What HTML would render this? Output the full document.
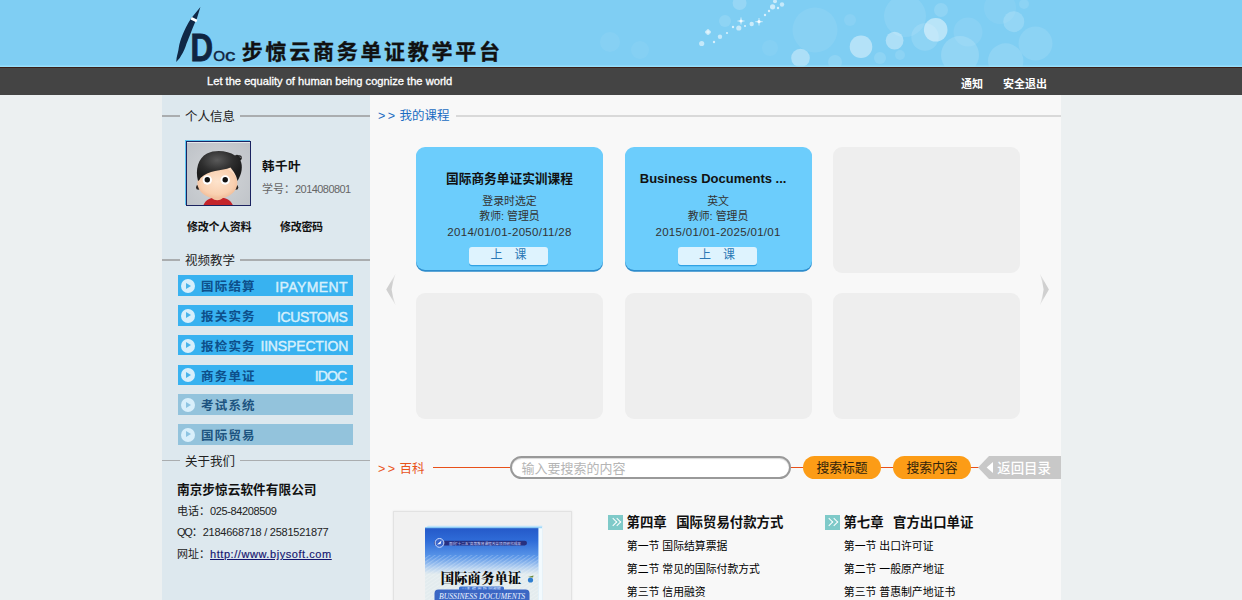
<!DOCTYPE html>
<html lang="zh-CN">
<head>
<meta charset="utf-8">
<title>步惊云商务单证教学平台</title>
<style>
*{margin:0;padding:0;box-sizing:border-box;}
html,body{width:1242px;height:600px;overflow:hidden;background:#ecf0f1;font-family:"Liberation Sans","Noto Sans CJK SC",sans-serif;font-size:12px;color:#222;}
.abs{position:absolute;}
#hdr{position:absolute;left:0;top:0;width:1242px;height:68px;background:#7fcef3;overflow:hidden;}
#bar{position:absolute;left:0;top:67.3px;width:1242px;height:27.7px;background:#444;border-top:1.3px solid #3a1f18;}
#side{position:absolute;left:163px;top:95px;width:207px;height:505px;background:#dde8ee;box-shadow:-1px 0 0 #dde8ee;}
#main{position:absolute;left:370px;top:95px;width:690.5px;height:505px;background:#f8f8f8;}
.title{position:absolute;left:241.8px;top:37.9px;font-size:21px;font-weight:700;letter-spacing:2.72px;-webkit-text-stroke:.35px #111;color:#111;white-space:nowrap;line-height:28px;}
.slogan{position:absolute;left:207px;top:73px;color:#fff;font-size:11.15px;-webkit-text-stroke:.3px #fff;line-height:16px;white-space:nowrap;}
.nav{position:absolute;top:75.5px;color:#fff;font-size:11px;font-weight:700;line-height:16px;white-space:nowrap;}
.sect{position:absolute;left:0;width:207px;height:16px;}
.sect i{position:absolute;left:-1px;top:7.3px;width:208px;height:1.6px;background:#aaadaf;}
.sect span{position:absolute;left:17px;top:1.3px;padding:0 5px;background:#dde8ee;font-size:12.5px;line-height:16px;color:#222;}
.vbtn{position:absolute;left:15px;width:175px;height:20.7px;background:#38b2f0;color:#0d4f8a;font-size:12.5px;font-weight:700;letter-spacing:1.2px;line-height:24.4px;padding-left:23px;white-space:nowrap;}
.vbtn.g{background:#93c3dc;color:#1d5480;}
.vbtn b{position:absolute;left:3px;top:3.9px;width:14px;height:14px;border-radius:50%;background:#d8effb;}
.vbtn b:after{content:"";position:absolute;left:5px;top:3.5px;border-left:5px solid #49b4ea;border-top:3.5px solid transparent;border-bottom:3.5px solid transparent;}
.vbtn.g b:after{border-left-color:#8dc4e2;}
.vbtn em{position:absolute;right:5.5px;top:-.4px;font-style:normal;color:#d6effc;font-size:14px;letter-spacing:0;font-weight:400;-webkit-text-stroke:.45px #d6effc;}
.card{position:absolute;width:187px;height:125px;border-radius:9px;background:#eeeeee;}
.card.on{height:123.4px;background:#6ccdfc;box-shadow:0 1.7px 0 #2d8ccc;text-align:center;color:#333;}
.card .t{position:absolute;left:0;width:187px;top:22px;font-size:12.7px;font-weight:700;color:#111;line-height:20px;white-space:nowrap;}
.card .l{position:absolute;left:0;width:187px;font-size:10.9px;line-height:16px;white-space:nowrap;}
.card .go{position:absolute;left:53px;top:100px;width:79px;height:17px;border-radius:3px;background:#def3fe;box-shadow:0 1.2px 0 #30a2e4;color:#2b78b5;font-size:12px;line-height:17.5px;height:17.5px;letter-spacing:0;}

.pill{position:absolute;top:361px;width:78px;height:23px;border-radius:12px;background:#fc9c16;color:#33240c;font-size:12.8px;line-height:23.5px;text-align:center;white-space:nowrap;}
.chap{position:absolute;word-spacing:1px;margin-top:.8px;font-size:13.4px;font-weight:700;color:#111;line-height:18px;white-space:nowrap;}
.sec{position:absolute;font-size:10.85px;color:#000;line-height:16px;white-space:nowrap;}
.cico{position:absolute;width:15px;height:15.3px;background:#7fcac9;}
.cico:before,.cico:after{content:"";position:absolute;top:4px;width:5.2px;height:5.2px;border-top:1px solid #fff;border-right:1px solid #fff;transform:rotate(45deg);}
.cico:before{left:1.2px;}.cico:after{left:5.4px;}
</style>
</head>
<body>
<div id="hdr">
<svg class="abs" style="left:0;top:0" width="1242" height="68" viewBox="0 0 1242 68">
<g style="filter:blur(.6px)"><circle cx="815" cy="30" r="22.5" fill="#fff" fill-opacity="0.07"/><circle cx="905" cy="16" r="21" fill="#fff" fill-opacity="0.09"/><circle cx="925" cy="37" r="13.7" fill="#fff" fill-opacity="0.12"/><circle cx="941" cy="10" r="7" fill="#fff" fill-opacity="0.13"/><circle cx="960" cy="55" r="19" fill="#fff" fill-opacity="0.15"/><circle cx="968" cy="32" r="14.5" fill="#fff" fill-opacity="0.08"/><circle cx="1005.7" cy="61" r="17.7" fill="#fff" fill-opacity="0.13"/><circle cx="1013.8" cy="21.7" r="10.5" fill="#fff" fill-opacity="0.17"/><circle cx="1035.5" cy="43.5" r="17" fill="#fff" fill-opacity="0.1"/><circle cx="1000" cy="8" r="16" fill="#fff" fill-opacity="0.06"/><circle cx="1024" cy="4" r="5" fill="#fff" fill-opacity="0.1"/><circle cx="610" cy="42" r="10" fill="#fff" fill-opacity="0.06"/><circle cx="640" cy="50" r="9" fill="#fff" fill-opacity="0.05"/><circle cx="739.6" cy="3" r="7" fill="#fff" fill-opacity="0.18"/><circle cx="725" cy="21" r="6" fill="#fff" fill-opacity="0.12"/><circle cx="770" cy="48" r="8" fill="#fff" fill-opacity="0.05"/><circle cx="835" cy="62" r="7" fill="#fff" fill-opacity="0.12"/><circle cx="850" cy="20" r="6" fill="#fff" fill-opacity="0.08"/><circle cx="880" cy="58" r="6" fill="#fff" fill-opacity="0.12"/><circle cx="900" cy="55" r="5" fill="#fff" fill-opacity="0.1"/>
<circle cx="800.5" cy="58" r="9.3" fill="#fff" fill-opacity="0.36"/><circle cx="861" cy="46.7" r="11.3" fill="#fff" fill-opacity="0.42"/><circle cx="894.6" cy="40.6" r="8.9" fill="#fff" fill-opacity="0.36"/><circle cx="935.7" cy="29.8" r="11.8" fill="#fff" fill-opacity="0.45"/></g>
<g style="filter:blur(.4px)"><circle cx="701.7" cy="43.5" r="2.6" fill="#fff" fill-opacity="0.55"/><circle cx="708" cy="32" r="2.6" fill="#fff" fill-opacity="0.5"/><circle cx="720" cy="36.7" r="2.2" fill="#fff" fill-opacity="0.55"/><circle cx="714" cy="42" r="1.2" fill="#fff" fill-opacity="0.7"/><circle cx="738.8" cy="28" r="2.6" fill="#fff" fill-opacity="0.55"/><circle cx="741" cy="21" r="1.6" fill="#fff" fill-opacity="0.8"/><circle cx="733" cy="27" r="1.2" fill="#fff" fill-opacity="0.7"/><circle cx="751.7" cy="24" r="2.2" fill="#fff" fill-opacity="0.6"/><circle cx="759" cy="21.7" r="1.6" fill="#fff" fill-opacity="0.85"/><circle cx="765" cy="15" r="1.2" fill="#fff" fill-opacity="0.7"/><circle cx="769" cy="11" r="1.2" fill="#fff" fill-opacity="0.7"/><circle cx="772.6" cy="6.8" r="2.6" fill="#fff" fill-opacity="0.6"/><circle cx="782" cy="4.5" r="2.2" fill="#fff" fill-opacity="0.55"/><circle cx="775" cy="1.3" r="2" fill="#fff" fill-opacity="0.6"/><circle cx="778" cy="8" r="1.2" fill="#fff" fill-opacity="0.7"/><circle cx="727" cy="33" r="1.1" fill="#fff" fill-opacity="0.7"/><circle cx="745" cy="26" r="1.1" fill="#fff" fill-opacity="0.7"/><path d="M741 17.5V24.5M737.5 21H744.5M759 18V25.5M755.3 21.7H762.7M708 29V35M705 32H711" stroke="#fff" stroke-opacity=".8" stroke-width=".8"/></g>
<rect x="0" y="65.5" width="1242" height="1.5" fill="#9fe3fb" fill-opacity=".8"/>
</svg>
<svg class="abs" style="left:165px;top:0" width="90" height="68" viewBox="0 0 90 68">
<path d="M35.4 7 L26 18.6 C22 25 19.5 30 17.5 35 C15.5 40 14.3 44 13.8 47.5 C13.4 51 12.2 55 11.6 58 L11.2 62 L14.8 58 C16.5 55 19 51 20.4 47 C22 42 23.5 39 25 35 C26.5 31 28 27 29.8 23 L31.6 19.5 Z" fill="#102846"/>
<path d="M26.2 18.2 L31.8 21" stroke="#fff" stroke-width="2.8"/>
<text transform="translate(25.4,61.3) scale(0.79,1)" font-family="Liberation Sans,sans-serif" font-weight="700" font-size="39.5" fill="#0f2440" stroke="#0f2440" stroke-width="0.9">D</text>
<text x="48.2" y="61.4" font-family="Liberation Sans,sans-serif" font-size="15.2" fill="#0f2440" stroke="#0f2440" stroke-width="0.45">O</text>
<text transform="translate(60,61.4) scale(1.25,1)" font-family="Liberation Sans,sans-serif" font-size="16.6" fill="#0f2440" stroke="#0f2440" stroke-width="0.4">c</text>
</svg>
<div class="title">步惊云商务单证教学平台</div>
</div>
<div id="bar"></div>
<div class="slogan">Let the equality of human being cognize the world</div>
<div class="nav" style="left:961px">通知</div>
<div class="nav" style="left:1003px">安全退出</div>

<div id="side">
<div class="sect" style="top:13px"><i></i><span>个人信息</span></div>
<div class="abs" style="left:23px;top:46px;width:65px;height:65px;border:1px solid #1b2360;background:#c9cdd2;overflow:hidden;box-shadow:-1px -1px 0 #5cc4f0">
<svg width="63" height="63" viewBox="187 142 63 63" style="display:block">
<defs><radialGradient id="avb" cx=".5" cy=".55" r=".7"><stop offset="0" stop-color="#d3d6d9"/><stop offset="1" stop-color="#bfc3c8"/></radialGradient>
<radialGradient id="avf" cx=".5" cy=".45" r=".6"><stop offset="0" stop-color="#fde3cc"/><stop offset=".7" stop-color="#f9d0b0"/><stop offset="1" stop-color="#eeb792"/></radialGradient>
<radialGradient id="avh" cx=".45" cy=".3" r=".6"><stop offset="0" stop-color="#5a5a5a"/><stop offset=".6" stop-color="#2e2e2e"/><stop offset="1" stop-color="#1c1c1c"/></radialGradient></defs>
<rect x="187" y="142" width="63" height="63" fill="url(#avb)"/>
<rect x="187" y="142" width="63" height="1" fill="#e6e8ea"/>
<path d="M203.5 205 C206 199 211 197.5 218 197.5 C225 197.5 230 199 232.8 205 Z" fill="#c4242a"/>
<path d="M212 194 H222.5 V198 C220 201 214.5 201 212 198 Z" fill="#f4c6a4"/>
<circle cx="198.3" cy="187.4" r="2.3" fill="#2a2320"/><circle cx="236" cy="187.4" r="2.3" fill="#2a2320"/>
<ellipse cx="220" cy="175" rx="17" ry="13" fill="#fbdcc2"/><ellipse cx="217.4" cy="183" rx="20" ry="15.6" fill="url(#avf)"/>
<path d="M198 181 C195 170 198 158 207 153.5 C215 149.5 228 150.5 235 155.5 C237 154 239.5 155 240 157.5 C241.5 157.5 242 159.5 240.5 160.5 C243 166 242 174 237.5 181 C236.8 176 233.5 171 230.5 167.5 C222 171 208 170 200.5 178 C199.8 179.5 199 180.5 198 181 Z" fill="url(#avh)"/>
<path d="M237.5 157.5 C238.5 155 241.5 155.5 241.3 158 C241.2 159.5 239.5 159.8 239.3 158.6" fill="none" stroke="#222" stroke-width="1.1"/><circle cx="207.3" cy="180" r="4.7" fill="#fff"/><circle cx="225.2" cy="180" r="4.7" fill="#fff"/>
<circle cx="207.3" cy="179.8" r="2.7" fill="#111"/><circle cx="225.2" cy="179.8" r="2.7" fill="#111"/>
</svg>
</div>
<div class="abs" style="left:99px;top:63.5px;font-size:12.5px;font-weight:700;color:#111;line-height:16px;letter-spacing:.5px">韩千叶</div>
<div class="abs" style="left:99px;top:86px;font-size:11px;color:#666;line-height:16px;white-space:nowrap">学号：<span style="letter-spacing:-.55px">2014080801</span></div>
<div class="abs" style="left:24px;top:124px;font-size:11px;letter-spacing:-.3px;font-weight:700;color:#111;line-height:16px;white-space:nowrap">修改个人资料</div>
<div class="abs" style="left:117px;top:124px;font-size:11px;letter-spacing:-.3px;font-weight:700;color:#111;line-height:16px;white-space:nowrap">修改密码</div>
<div class="sect" style="top:157px"><i></i><span>视频教学</span></div>
<div class="vbtn" style="top:180.2px"><b></b>国际结算<em style="letter-spacing:.4px;right:5px">IPAYMENT</em></div>
<div class="vbtn" style="top:210px"><b></b>报关实务<em style="letter-spacing:-.4px;right:5.5px">ICUSTOMS</em></div>
<div class="vbtn" style="top:239.8px"><b></b>报检实务<em style="letter-spacing:-.15px;right:4.8px">IINSPECTION</em></div>
<div class="vbtn" style="top:269.5px"><b></b>商务单证<em style="letter-spacing:-.9px;right:6.8px">IDOC</em></div>
<div class="vbtn g" style="top:299.3px"><b></b>考试系统</div>
<div class="vbtn g" style="top:329.1px"><b></b>国际贸易</div>
<div class="sect" style="top:357.3px"><i></i><span>关于我们</span></div>
<div class="abs" style="left:14px;top:387.3px;font-size:12.7px;font-weight:700;color:#111;line-height:16px;white-space:nowrap">南京步惊云软件有限公司</div>
<div class="abs" style="left:14px;top:408px;font-size:11px;color:#222;line-height:16px;white-space:nowrap">电话：<span style="letter-spacing:-.38px">025-84208509</span></div>
<div class="abs" style="left:14px;top:429px;font-size:11px;color:#222;line-height:16px;white-space:nowrap"><span style="letter-spacing:-1.2px">QQ</span>：<span style="letter-spacing:-.25px">2184668718 / 2581521877</span></div>
<div class="abs" style="left:14px;top:451px;font-size:11px;color:#222;line-height:16px;white-space:nowrap">网址：<span style="color:#1a1a8a;text-decoration:underline;letter-spacing:.56px;color:#14146e;-webkit-text-stroke:.15px #14146e">http://www.bjysoft.com</span></div>
</div>

<div id="main">
<div class="abs" style="left:8px;top:13px;font-size:12.5px;color:#1a6cc2;line-height:16px;white-space:nowrap;z-index:2"><span style="letter-spacing:2.5px">&gt;&gt;</span></div>
<div class="abs" style="left:29.5px;top:13px;font-size:12.5px;color:#1a6cc2;line-height:16px;white-space:nowrap;z-index:2">我的课程</div>
<div class="abs" style="left:86px;top:20px;width:604.5px;height:2px;background:#d9d9d9"></div>

<div class="card on" style="left:46px;top:52px">
<div class="t">国际商务单证实训课程</div>
<div class="l" style="top:45.5px">登录时选定</div>
<div class="l" style="top:61px">教师: 管理员</div>
<div class="l" style="top:77px;font-size:11.5px;letter-spacing:.3px">2014/01/01-2050/11/28</div>
<div class="go">上　课</div>
</div>
<div class="card on" style="left:254.6px;top:52px">
<div class="t" style="font-size:13px;padding-right:10px">Business Documents ...</div>
<div class="l" style="top:45.5px">英文</div>
<div class="l" style="top:61px">教师: 管理员</div>
<div class="l" style="top:77px;font-size:11.5px;letter-spacing:.3px">2015/01/01-2025/01/01</div>
<div class="go">上　课</div>
</div>
<div class="card" style="left:463px;top:52px;height:125.5px"></div>
<div class="card" style="left:46px;top:198.2px;height:125.5px"></div>
<div class="card" style="left:254.6px;top:198.2px;height:125.5px"></div>
<div class="card" style="left:463px;top:198.2px;height:125.5px"></div>

<div class="abs" style="left:8px;top:365.5px;font-size:12.5px;color:#e8531a;line-height:16px;white-space:nowrap"><span style="letter-spacing:2.5px">&gt;&gt;</span></div>
<div class="abs" style="left:29.5px;top:365.5px;font-size:12.5px;color:#e8531a;line-height:16px;white-space:nowrap">百科</div>
<div class="abs" style="left:63px;top:372px;width:625px;height:1.25px;background:#e8501a"></div>
<div class="abs" style="left:140px;top:361px;width:281px;height:23px;border-radius:12px;background:#fff;border:2px solid #999;box-shadow:inset 0 1px 1px rgba(0,0,0,.15);color:#b5b5b5;font-size:13px;line-height:22.3px;padding-left:9.5px;overflow:hidden;white-space:nowrap">输入要搜索的内容</div>
<div class="pill" style="left:433px">搜索标题</div>
<div class="pill" style="left:523px">搜索内容</div>
<svg class="abs" style="left:608px;top:361px" width="83" height="23" viewBox="0 0 83 23"><path d="M0 11.5 L11 0 H83 V23 H11 Z" fill="#c8c8c8"/><path d="M15 6 V17 L8.6 11.5 Z" fill="#fff"/><text x="19.3" y="16.6" font-family="Liberation Sans,Noto Sans CJK SC,sans-serif" font-size="13.4" font-weight="500" fill="#fff">返回目录</text></svg>

<div class="abs" style="left:23px;top:416px;width:179px;height:100px;background:#f1f1f1;border:1px solid #e2e2e2;box-shadow:0 0 2px rgba(0,0,0,.08)"></div>
<svg class="abs" style="left:55px;top:430px" width="118" height="75" viewBox="0 0 118 75">
<defs><linearGradient id="bk" x1="0" y1="0" x2="0" y2="1"><stop offset="0" stop-color="#2458c8"/><stop offset=".18" stop-color="#2f6cd8"/><stop offset=".4" stop-color="#5a96e8"/><stop offset=".55" stop-color="#b4d0f0"/><stop offset=".64" stop-color="#e2ebee"/><stop offset="1" stop-color="#e4ecee"/></linearGradient>
<pattern id="ht" width="3" height="3" patternUnits="userSpaceOnUse" patternTransform="rotate(-35)"><rect width="3" height="1" fill="#fff" fill-opacity=".22"/></pattern></defs>
<path d="M3 0.8 H117.3 V75 H113 V3 H0 Z" fill="#bfe4fb"/>
<rect x="0" y="2.6" width="113.6" height="73" fill="url(#bk)"/>
<rect x="0" y="30" width="113.6" height="45" fill="url(#ht)"/>
<rect x="113.6" y="2" width="3.7" height="73" fill="#f2fafe"/>
<rect x="0" y="2.2" width="117" height="1" fill="#8fd0f6"/>
<rect x="9" y="15.8" width="93" height="4.6" rx="2.3" fill="#27307f"/>
<text x="24" y="19.6" font-family="Liberation Sans,Noto Sans CJK SC,sans-serif" font-size="3.6" fill="#cfd8ff" textLength="72" lengthAdjust="spacingAndGlyphs">面向“十二五”高等教育课程改革项目研究成果</text>
<circle cx="14.5" cy="17.9" r="4.4" fill="#3a66cc" stroke="#cfe0ff" stroke-width="1"/>
<path d="M12 19.6 L16.5 15.4 L15.5 19.1 Z" fill="#fff"/>
<text x="56" y="57.6" text-anchor="middle" font-family="Liberation Serif,Noto Serif CJK SC,serif" font-weight="900" font-size="13.4" fill="#0a0a0a">国际商务单证</text>
<circle cx="105.5" cy="55" r="2.6" fill="#2f7fd0"/><path d="M103 52 L108.5 50.5 L108 52.5 Z" fill="#6a8a3a"/>
<rect x="34" y="61.6" width="45" height="3.8" rx="1.5" fill="#3a6fd0"/>
<text x="37" y="64.6" font-family="Liberation Sans,Noto Sans CJK SC,sans-serif" font-size="3" fill="#e8f0ff" textLength="39" lengthAdjust="spacingAndGlyphs">◎主 编 周 跃 向淑媛</text>
<rect x="9.5" y="64.6" width="95" height="14" rx="4" fill="#3c67c4"/>
<text x="57" y="74.3" text-anchor="middle" font-family="Liberation Serif,serif" font-style="italic" font-size="8.5" fill="#eef4ff" textLength="86" lengthAdjust="spacingAndGlyphs">BUSSINESS DOCUMENTS</text>
</svg>

<div class="cico" style="left:238.4px;top:419.7px"></div>
<div class="chap" style="left:256.6px;top:418.6px">第四章&nbsp; 国际贸易付款方式</div>
<div class="sec" style="left:256.8px;top:442.5px">第一节 国际结算票据</div>
<div class="sec" style="left:256.8px;top:465.5px">第二节 常见的国际付款方式</div>
<div class="sec" style="left:256.8px;top:488.7px">第三节 信用融资</div>
<div class="cico" style="left:455.2px;top:419.7px"></div>
<div class="chap" style="left:473.4px;top:418.6px">第七章&nbsp; 官方出口单证</div>
<div class="sec" style="left:473.8px;top:442.5px">第一节 出口许可证</div>
<div class="sec" style="left:473.8px;top:465.5px">第二节 一般原产地证</div>
<div class="sec" style="left:473.8px;top:488.7px">第三节 普惠制产地证书</div>

<svg class="abs" style="left:0;top:170px" width="690" height="50" viewBox="0 170 690 50"><defs><linearGradient id="ag" x1="0" y1="0" x2="0" y2="1"><stop offset="0" stop-color="#d0d0d0" stop-opacity=".3"/><stop offset=".3" stop-color="#d0d0d0"/><stop offset=".7" stop-color="#d0d0d0"/><stop offset="1" stop-color="#d0d0d0" stop-opacity=".3"/></linearGradient></defs>
<path d="M25.7 178.5 L16.2 194.5 L25.7 210.5 Q22.4 201.5 21.6 194.5 Q22.4 187.5 25.7 178.5 Z" fill="url(#ag)"/>
<path d="M669.8 178.5 L678.9 194.5 L669.8 210.5 Q672.9 201.5 673.6 194.5 Q672.9 187.5 669.8 178.5 Z" fill="url(#ag)"/></svg>
</div>
</body>
</html>
